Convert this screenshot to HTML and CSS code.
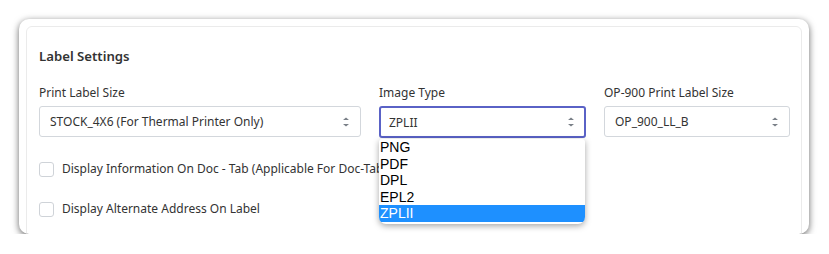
FILE: index.html
```html
<!DOCTYPE html>
<html lang="en">
<head>
  <meta charset="UTF-8" />
  <title>Label Settings</title>
  <link rel="stylesheet" href="styles.css">
</head>
<body>
  <div class="window">
    <div class="card">
      <h3 class="card-title">Label Settings</h3>

      <div class="fields">
        <div class="field">
          <label>Print Label Size</label>
          <div class="select">
            <span>STOCK_4X6 (For Thermal Printer Only)</span>
            <svg class="caret" viewBox="0 0 8 12"><path d="M1 4 L4 1.5 L7 4 Z M1 8 L4 10.5 L7 8 Z"/></svg>
          </div>
        </div>

        <div class="field">
          <label>Image Type</label>
          <div class="select focused">
            <span>ZPLII</span>
            <svg class="caret" viewBox="0 0 8 12"><path d="M1 4 L4 1.5 L7 4 Z M1 8 L4 10.5 L7 8 Z"/></svg>
            <ul class="options">
              <li>PNG</li>
              <li>PDF</li>
              <li>DPL</li>
              <li>EPL2</li>
              <li class="selected">ZPLII</li>
            </ul>
          </div>
        </div>

        <div class="field">
          <label>OP-900 Print Label Size</label>
          <div class="select">
            <span>OP_900_LL_B</span>
            <svg class="caret" viewBox="0 0 8 12"><path d="M1 4 L4 1.5 L7 4 Z M1 8 L4 10.5 L7 8 Z"/></svg>
          </div>
        </div>
      </div>

      <div class="check">
        <span class="box"></span>
        <span class="check-text long">Display Information On Doc - Tab (Applicable For Doc-Tab Labels Only)</span>
      </div>
      <div class="check">
        <span class="box"></span>
        <span class="check-text">Display Alternate Address On Label</span>
      </div>
    </div>
  </div>
</body>
</html>
```

FILE: styles.css
```css
body {
  margin: 0;
  background: #fff;
  font-family: "Noto Sans", sans-serif;
  color: #333;
}
.window {
  box-sizing: border-box;
  margin: 19px 20px 0 19px;
  height: 215px;
  padding: 7px 7px 0;
  background: #fff;
  border-radius: 10px;
  box-shadow: 0 2px 7px rgba(0,0,0,0.6);
  overflow: hidden;
}
.card {
  height: 260px;
  padding: 19px 12px 0;
  border: 1px solid #ebebeb;
  border-radius: 6px;
}
.card-title {
  margin: 0;
  font-size: 13.2px;
  font-weight: 600;
  line-height: 20px;
  color: #333;
}
.fields {
  display: grid;
  grid-template-columns: 322px 207px 186px;
  gap: 18px;
  margin-top: 17px;
}
.field label {
  display: block;
  font-size: 12px;
  line-height: 20px;
  margin-bottom: 3px;
}
.select {
  position: relative;
  display: flex;
  align-items: center;
  justify-content: space-between;
  height: 31px;
  padding: 0 10px;
  border: 1px solid #d3d7dc;
  border-radius: 3px;
  font-size: 12px;
  color: #333;
  box-sizing: border-box;
}
.select.focused {
  border: 2px solid #5a62c6;
  padding: 0 9px 0 8px;
  height: 32px;
}
.caret {
  width: 8px;
  height: 12px;
  fill: #7a8088;
}
.options {
  position: absolute;
  top: 31px;
  left: -2px;
  width: 206px;
  margin: 0;
  padding: 0 0 2px;
  list-style: none;
  background: #fff;
  border-radius: 3px 3px 7px 7px;
  box-shadow: 0 2px 6px rgba(0,0,0,0.35);
  font-family: "Liberation Sans", Arial, sans-serif;
  font-size: 14px;
  color: #000;
  overflow: hidden;
  z-index: 2;
}
.options li {
  height: 16.5px;
  line-height: 16px;
  padding-left: 1px;
}
.options li.selected {
  background: #1e90ff;
  color: #fff;
}
.check {
  display: flex;
  align-items: center;
  gap: 8px;
  margin-top: 22px;
  font-size: 12px;
  line-height: 18px;
  white-space: nowrap;
}
.check-text.long {
  max-width: 318px;
  overflow: hidden;
}
.box {
  width: 13px;
  height: 13px;
  border: 1px solid #cfd3d8;
  border-radius: 3px;
  flex: none;
}
```
